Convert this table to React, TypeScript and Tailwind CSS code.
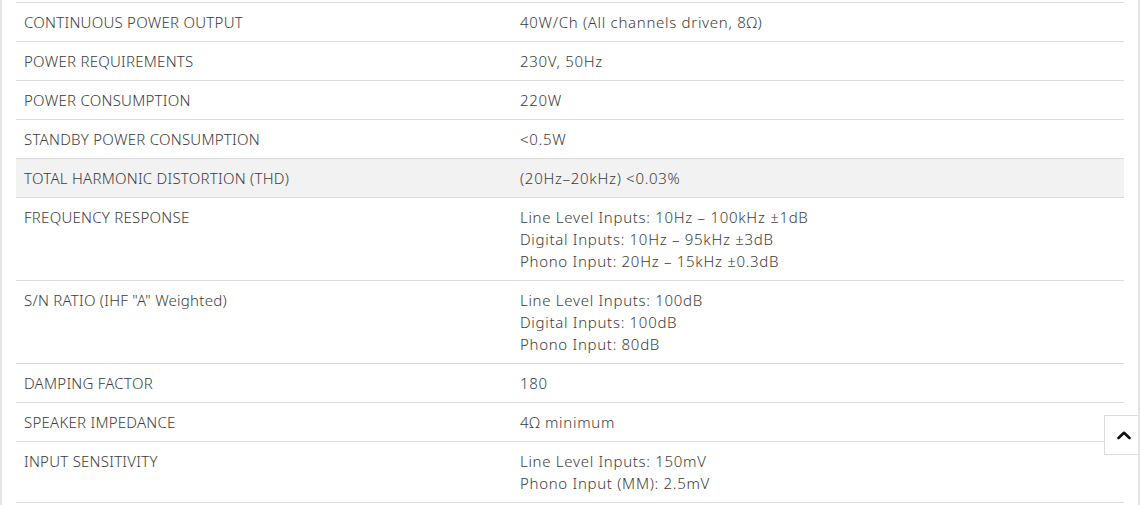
import React from "react";

const rows: { k: string; v: string[]; hl?: boolean }[] = [
  { k: "CONTINUOUS POWER OUTPUT", v: ["40W/Ch (All channels driven, 8Ω)"] },
  { k: "POWER REQUIREMENTS", v: ["230V, 50Hz"] },
  { k: "POWER CONSUMPTION", v: ["220W"] },
  { k: "STANDBY POWER CONSUMPTION", v: ["<0.5W"] },
  { k: "TOTAL HARMONIC DISTORTION (THD)", v: ["(20Hz–20kHz) <0.03%"], hl: true },
  {
    k: "FREQUENCY RESPONSE",
    v: [
      "Line Level Inputs: 10Hz – 100kHz ±1dB",
      "Digital Inputs: 10Hz – 95kHz ±3dB",
      "Phono Input: 20Hz – 15kHz ±0.3dB",
    ],
  },
  {
    k: 'S/N RATIO (IHF "A" Weighted)',
    v: ["Line Level Inputs: 100dB", "Digital Inputs: 100dB", "Phono Input: 80dB"],
  },
  { k: "DAMPING FACTOR", v: ["180"] },
  { k: "SPEAKER IMPEDANCE", v: ["4Ω minimum"] },
  { k: "INPUT SENSITIVITY", v: ["Line Level Inputs: 150mV", "Phono Input (MM): 2.5mV"] },
];

export default function App() {
  return (
    <div
      className="relative w-[1140px] h-[505px] overflow-hidden bg-white border-l-2 border-r-2 border-[#e6e6e6] text-[#3c3c3c]"
      style={{ fontFamily: "'Noto Sans', 'Open Sans', sans-serif" }}
    >
      <div className="pt-[2px] pl-[14px] pr-[14px]">
        <div className="border-t border-[#dcdcdc]">
          {rows.map((r) => (
            <div
              key={r.k}
              className={`flex border-b border-[#dcdcdc] text-[15px] leading-[22px] font-light ${r.hl ? "bg-[#f2f2f2]" : ""}`}
            >
              <div className="w-[496px] shrink-0 px-2 py-2 tracking-[0.25px]">{r.k}</div>
              <div className="flex-1 px-2 py-2 tracking-[0.7px]">
                {r.v.map((l) => (
                  <div key={l}>{l}</div>
                ))}
              </div>
            </div>
          ))}
        </div>
      </div>
      <div className="absolute left-[1102px] top-[415px] w-[40px] h-[40px] bg-white border border-[#dcdcdc] flex items-center justify-center">
        <svg width="16" height="10" viewBox="0 0 16 10" fill="none">
          <path d="M2.5 8 L8 2.8 L13.5 8" stroke="#111" strokeWidth="2.6" strokeLinecap="round" strokeLinejoin="round" />
        </svg>
      </div>
    </div>
  );
}
